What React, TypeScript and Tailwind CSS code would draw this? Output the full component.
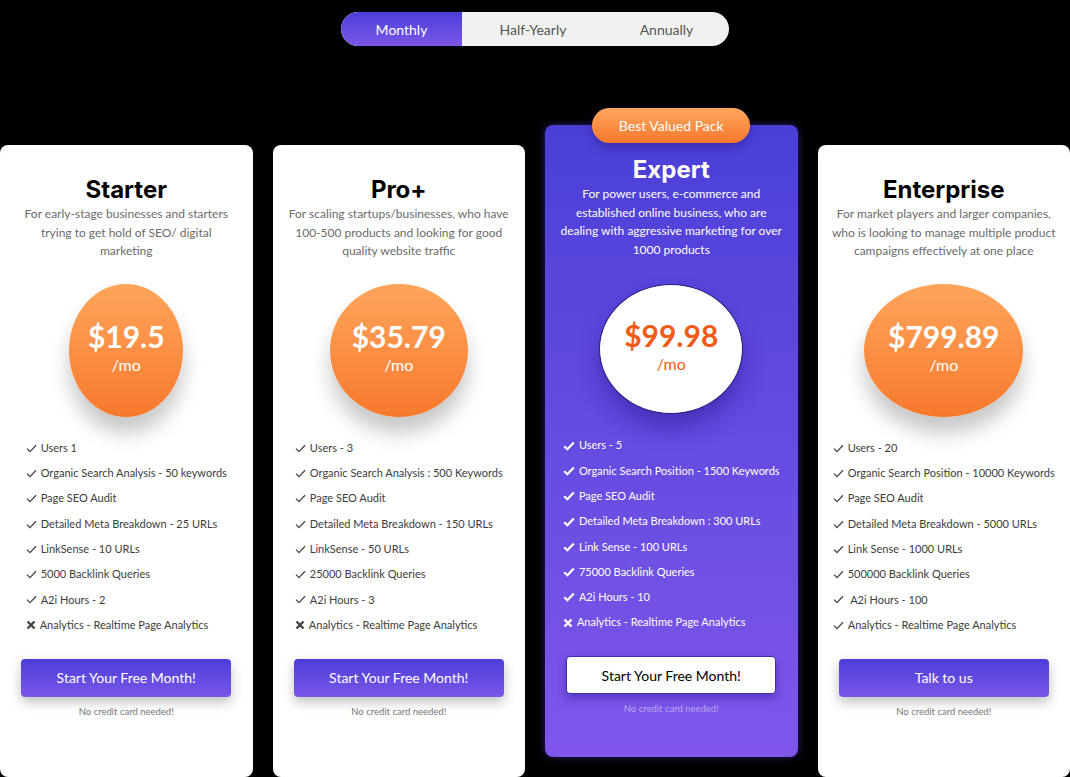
import { useState } from 'react';

type Plan = {
  name: string;
  desc: string[];
  price: string;
  features: { text: string; ok: boolean }[];
  cta: string;
  circleW: string;
  featured?: boolean;
};

const plans: Plan[] = [
  {
    name: 'Starter',
    desc: ['For early-stage businesses and starters', 'trying to get hold of SEO/ digital', 'marketing'],
    price: '$19.5',
    circleW: 'w-[114px]',
    cta: 'Start Your Free Month!',
    features: [
      { text: 'Users 1', ok: true },
      { text: 'Organic Search Analysis - 50 keywords', ok: true },
      { text: 'Page SEO Audit', ok: true },
      { text: 'Detailed Meta Breakdown - 25 URLs', ok: true },
      { text: 'LinkSense - 10 URLs', ok: true },
      { text: '5000 Backlink Queries', ok: true },
      { text: 'A2i Hours - 2', ok: true },
      { text: 'Analytics - Realtime Page Analytics', ok: false },
    ],
  },
  {
    name: 'Pro+',
    desc: ['For scaling startups/businesses, who have', '100-500 products and looking for good', 'quality website traffic'],
    price: '$35.79',
    circleW: 'w-[138px]',
    cta: 'Start Your Free Month!',
    features: [
      { text: 'Users - 3', ok: true },
      { text: 'Organic Search Analysis : 500 Keywords', ok: true },
      { text: 'Page SEO Audit', ok: true },
      { text: 'Detailed Meta Breakdown - 150 URLs', ok: true },
      { text: 'LinkSense - 50 URLs', ok: true },
      { text: '25000 Backlink Queries', ok: true },
      { text: 'A2i Hours - 3', ok: true },
      { text: 'Analytics - Realtime Page Analytics', ok: false },
    ],
  },
  {
    name: 'Expert',
    desc: [
      'For power users, e-commerce and',
      'established online business, who are',
      'dealing with aggressive marketing for over',
      '1000 products',
    ],
    price: '$99.98',
    circleW: 'w-[144px]',
    cta: 'Start Your Free Month!',
    featured: true,
    features: [
      { text: 'Users - 5', ok: true },
      { text: 'Organic Search Position - 1500 Keywords', ok: true },
      { text: 'Page SEO Audit', ok: true },
      { text: 'Detailed Meta Breakdown : 300 URLs', ok: true },
      { text: 'Link Sense - 100 URLs', ok: true },
      { text: '75000 Backlink Queries', ok: true },
      { text: 'A2i Hours - 10', ok: true },
      { text: 'Analytics - Realtime Page Analytics', ok: false },
    ],
  },
  {
    name: 'Enterprise',
    desc: [
      'For market players and larger companies,',
      'who is looking to manage multiple product',
      'campaigns effectively at one place',
    ],
    price: '$799.89',
    circleW: 'w-[159px]',
    cta: 'Talk to us',
    features: [
      { text: 'Users - 20', ok: true },
      { text: 'Organic Search Position - 10000 Keywords', ok: true },
      { text: 'Page SEO Audit', ok: true },
      { text: 'Detailed Meta Breakdown - 5000 URLs', ok: true },
      { text: 'Link Sense - 1000 URLs', ok: true },
      { text: '500000 Backlink Queries', ok: true },
      { text: ' A2i Hours - 100', ok: true },
      { text: 'Analytics - Realtime Page Analytics', ok: true },
    ],
  },
];

const CheckThin = () => (
  <svg width="11" height="9" viewBox="0 0 11 9" className="shrink-0">
    <path d="M1 4.6 L4 7.6 L10 1.2" fill="none" stroke="#444" strokeWidth="1.3" />
  </svg>
);

const CheckBold = () => (
  <svg width="12" height="10" viewBox="0 0 12 10" className="shrink-0">
    <path d="M1.2 5.2 L4.4 8.2 L10.8 1.4" fill="none" stroke="#fff" strokeWidth="2.2" />
  </svg>
);

const Cross = ({ light }: { light?: boolean }) => (
  <svg width="10" height="10" viewBox="0 0 10 10" className="shrink-0">
    <path d="M1.5 1.5 L8.5 8.5 M8.5 1.5 L1.5 8.5" fill="none" stroke={light ? '#fff' : '#444'} strokeWidth="2.4" />
  </svg>
);

const PlanCard = ({ plan }: { plan: Plan }) => {
  const f = plan.featured;
  return (
    <div
      className={`relative flex flex-col items-center h-[632px] rounded-lg ${
        f
          ? 'bg-gradient-to-b from-[#4a3fd7] to-[#8056ea] shadow-[0_0_8px_rgba(90,70,230,0.45)]'
          : 'mt-5 bg-white'
      }`}
    >
      {f && (
        <div className="absolute -top-[17px] left-1/2 -translate-x-1/2 w-[158px] h-[35px] rounded-full bg-gradient-to-b from-[#ffa75d] to-[#f6772a] flex items-center justify-center text-white text-[14px] shadow-[0_4px_10px_rgba(40,20,120,0.45)]">
          Best Valued Pack
        </div>
      )}
      <h2
        className={`mt-[31px] text-[24px] leading-[28px] font-bold font-['Inter',sans-serif] ${
          f ? 'text-white' : 'text-black'
        }`}
      >
        {plan.name}
      </h2>
      <p
        className={`mt-[1px] text-center text-[12px] leading-[18.5px] whitespace-nowrap ${
          f ? 'text-white' : 'text-[#6b6b6b]'
        }`}
      >
        {plan.desc.map((line) => (
          <span key={line} className="block">
            {line}
          </span>
        ))}
      </p>
      <div
        className={`${plan.circleW} ${
          f
            ? 'mt-[25px] h-[130px] bg-white border border-[#1f1d7a] shadow-[0_14px_22px_rgba(40,20,140,0.45)]'
            : 'mt-[23px] h-[133px] bg-gradient-to-b from-[#ffa55b] to-[#f6792b] shadow-[0_16px_20px_rgba(0,0,0,0.22)]'
        } rounded-[50%] flex flex-col items-center justify-center shrink-0`}
      >
        <div
          className={`text-[30px] leading-[34px] font-bold ${
            f ? 'text-[#f25b17]' : 'text-white'
          }`}
        >
          {plan.price}
        </div>
        <div className={`text-[16px] leading-[20px] mt-[2px] mb-[6px] ${f ? 'text-[#f25b17]' : 'text-white'}`}>
          /mo
        </div>
      </div>
      <ul className={`mt-[19px] flex flex-col ${f ? 'text-white' : 'text-[#3c3c3c]'}`}>
        {plan.features.map((it) => (
          <li key={it.text} className="h-[25.3px] flex items-center gap-[4px] text-[11px] whitespace-pre">
            {it.ok ? f ? <CheckBold /> : <CheckThin /> : <Cross light={f} />}
            <span>{it.text}</span>
          </li>
        ))}
      </ul>
      <button
        className={`mt-[21px] w-[210px] h-[38px] rounded-[4px] text-[14px] ${
          f
            ? 'bg-white text-black border border-[#3b2fb0] shadow-[0_4px_10px_rgba(40,20,140,0.45)]'
            : 'bg-gradient-to-b from-[#4a3ed8] to-[#7b56e8] text-white shadow-[0_5px_12px_rgba(0,0,0,0.25)]'
        }`}
      >
        {plan.cta}
      </button>
      <div className={`mt-[8px] text-[9.5px] ${f ? 'text-[#b8a6f5]' : 'text-[#777]'}`}>
        No credit card needed!
      </div>
    </div>
  );
};

export default function App() {
  const [period, setPeriod] = useState('Monthly');
  const tabs = [
    { label: 'Monthly', w: 'w-[121px]' },
    { label: 'Half-Yearly', w: 'w-[142px]' },
    { label: 'Annually', w: 'w-[125px]' },
  ];
  return (
    <div className="w-[1070px] h-[777px] bg-black overflow-hidden font-['Lato',sans-serif]">
      <div className="flex justify-center pt-3">
        <div className="flex h-[34px] rounded-full bg-[#f1f1f1] overflow-hidden">
          {tabs.map((t) => (
            <button
              key={t.label}
              onClick={() => setPeriod(t.label)}
              className={`${t.w} h-full text-[14px] ${
                period === t.label
                  ? 'bg-gradient-to-b from-[#4a3ed8] to-[#7b56e8] text-white rounded-l-full'
                  : 'text-[#555]'
              }`}
            >
              {t.label}
            </button>
          ))}
        </div>
      </div>
      <div className="mt-[79px] grid grid-cols-4 gap-5 items-start">
        {plans.map((p) => (
          <PlanCard key={p.name} plan={p} />
        ))}
      </div>
    </div>
  );
}
